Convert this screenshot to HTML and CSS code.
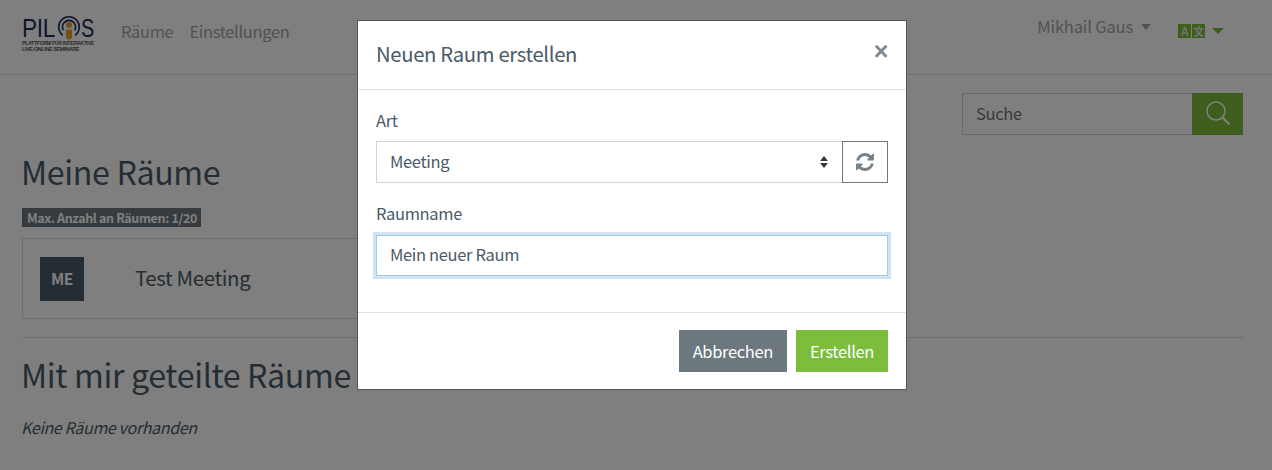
FILE: index.html
```html
<!DOCTYPE html>
<html lang="de">

<head>
    <meta charset="UTF-8">
    <meta name="viewport" content="width=device-width, initial-scale=1.0">
    <title>Meine Räume</title>
    <link rel="stylesheet" href="styles.css">
</head>

<body>
    <header class="navbar">
        <svg class="logo" width="74" height="38" viewBox="0 0 74 38">
            <text class="logo-name" x="0" y="22" textLength="33" lengthAdjust="spacingAndGlyphs">PIL</text>
            <circle cx="47" cy="12" r="10.3" fill="none" stroke="#1c2d5c" stroke-width="1.6"/>
            <circle cx="47" cy="12" r="6.6" fill="none" stroke="#1c2d5c" stroke-width="1.6"/>
            <path d="M41 24h12v-9h-12z" fill="#fff"/>
            <circle cx="47" cy="10" r="3" fill="#e5a02d"/>
            <path d="M44 14.500h6v7a3 3 0 0 1-6 0z" fill="#e5a02d"/>
            <text class="logo-name" x="59" y="22" textLength="13" lengthAdjust="spacingAndGlyphs">S</text>
            <text class="logo-sub" x="0" y="30" textLength="72" lengthAdjust="spacingAndGlyphs">PLATTFORM FÜR INTERAKTIVE</text>
            <text class="logo-sub" x="0" y="35.500" textLength="57" lengthAdjust="spacingAndGlyphs">LIVE-ONLINE SEMINARE</text>
        </svg>
        <nav class="nav-links">
            <a href="#">Räume</a>
            <a href="#">Einstellungen</a>
        </nav>
        <div class="nav-right">
            <a class="user-menu" href="#">Mikhail Gaus<span class="caret"></span></a>
            <a class="lang-menu" href="#">
                <span class="lang-box">A</span><span class="lang-box">文</span><span class="caret caret-green"></span>
            </a>
        </div>
    </header>

    <main class="content">
        <div class="search-row">
            <div class="search">
                <div class="search-input">Suche</div>
                <button class="search-btn" type="button">
                    <svg width="26" height="26" viewBox="0 0 26 26" fill="none" stroke="#fff" stroke-width="1.5">
                        <circle cx="11" cy="11" r="9"/>
                        <path d="M17.5 17.500l7 7" stroke-width="2.200"/>
                    </svg>
                </button>
            </div>
        </div>

        <h1 class="title">Meine Räume</h1>
        <span class="badge">Max. Anzahl an Räumen: 1/20</span>
        <div class="room-card">
            <div class="room-icon">ME</div>
            <div class="room-name">Test Meeting</div>
        </div>
        <hr class="divider">
        <h1 class="title title-shared">Mit mir geteilte Räume</h1>
        <p class="empty">Keine Räume vorhanden</p>
    </main>

    <div class="backdrop"></div>

    <div class="modal">
        <div class="modal-header">
            <h2>Neuen Raum erstellen</h2>
            <span class="close">×</span>
        </div>
        <div class="modal-body">
            <label class="field-label">Art</label>
            <div class="type-row">
                <div class="select">
                    Meeting
                    <svg class="select-arrows" width="8" height="12" viewBox="0 0 8 12" fill="#343a40">
                        <path d="M4 0l4 5H0z"/>
                        <path d="M4 12l4-5H0z"/>
                    </svg>
                </div>
                <button class="refresh-btn" type="button">
                    <svg width="18" height="18" viewBox="0 0 1536 1536" fill="#74828b">
                        <path d="M1511 928q0 5-1 7-64 268-268 434.500t-478 166.500q-146 0-282.500-55t-243.500-157l-129 129q-19 19-45 19t-45-19-19-45v-448q0-26 19-45t45-19h448q26 0 45 19t19 45-19 45l-137 137q71 66 161 102t187 36q134 0 250-65t186-179q11-17 53-117 8-23 30-23h192q13 0 22.500 9.500t9.500 22.500zm25-800v448q0 26-19 45t-45 19h-448q-26 0-45-19t-19-45 19-45l138-138q-148-137-349-137-134 0-250 65t-186 179q-11 17-53 117-8 23-30 23h-199q-13 0-22.500-9.500t-9.500-22.500v-7q65-268 270-434.500t480-166.500q146 0 284 55.500t245 156.500l130-129q19-19 45-19t45 19 19 45z"/>
                    </svg>
                </button>
            </div>
            <label class="field-label label-name">Raumname</label>
            <div class="text-input">Mein neuer Raum</div>
        </div>
        <div class="modal-footer">
            <button class="btn btn-grey" type="button">Abbrechen</button>
            <button class="btn btn-green" type="button">Erstellen</button>
        </div>
    </div>
</body>

</html>
```

FILE: styles.css
```css
/* Base */
body {
    font-family: "Noto Sans CJK SC", "Noto Sans", sans-serif;
    font-size: 16.5px;
    letter-spacing: -0.021em;
    line-height: 1.5;
    margin: 0;
    color: #4a5a68;
    background-color: #fff;
    height: 470px;
    overflow: hidden;
}

a {
    text-decoration: none;
    color: inherit;
}

/* Navbar */
.navbar {
    display: flex;
    align-items: flex-start;
    height: 75px;
    box-sizing: border-box;
    padding: 15px 48px 0 22px;
    border-bottom: 1px solid #dfdfdf;
}

.logo {
    flex-shrink: 0;
    overflow: visible;
}

.logo-name {
    font-family: "Liberation Sans", sans-serif;
    font-size: 26px;
    fill: #1c2d5c;
}

.logo-sub {
    font-family: "Liberation Sans", sans-serif;
    font-size: 5px;
    font-weight: bold;
    fill: #555;
}

.nav-links {
    display: flex;
    gap: 16px;
    margin-left: 25px;
    color: #a8a4a0;
    padding-top: 4px;
}

.nav-right {
    display: flex;
    margin-left: auto;
    color: #a8a4a0;
}

.user-menu {
    margin-top: -1px;
    letter-spacing: -0.01em;
}

.caret {
    display: inline-block;
    width: 0;
    height: 0;
    margin-left: 8px;
    vertical-align: 3px;
    border-top: 6px solid #a8a4a0;
    border-left: 5px solid transparent;
    border-right: 5px solid transparent;
}

.lang-menu {
    display: flex;
    align-items: center;
    gap: 1px;
    height: 14px;
    margin: 9px 0 0 27px;
}

.lang-box {
    width: 13px;
    height: 14px;
    background-color: #7cbd3c;
    color: #e4e4e4;
    font-size: 11px;
    font-weight: bold;
    line-height: 14px;
    text-align: center;
}

.caret-green {
    margin-left: 6px;
    vertical-align: 0;
    border-top-color: #7cbd3c;
    border-top-width: 6px;
    border-left-width: 6.5px;
    border-right-width: 6.5px;
}

/* Page content */
.content {
    padding: 18px 28px 0 22px;
}

.search-row {
    display: flex;
    justify-content: flex-end;
    padding-right: 1px;
}

.search {
    display: flex;
    width: 281px;
    height: 42px;
}

.search-input {
    flex: 1;
    border: 1px solid #ced4da;
    border-right: none;
    padding: 0 13px;
    line-height: 39px;
    color: #6c757d;
}

.search-btn {
    width: 51px;
    border: none;
    padding: 0;
    background-color: #7cbd3c;
}

.title {
    font-size: 32.200px;
    font-weight: 400;
    line-height: 42px;
    margin: 15px 0 0 -1px;
}

.badge {
    display: block;
    width: 179px;
    box-sizing: border-box;
    height: 19px;
    margin-top: 16px;
    padding-left: 5px;
    background-color: #6c777e;
    color: #fff;
    font-size: 12.500px;
    font-weight: 700;
    line-height: 19px;
    white-space: nowrap;
}

.room-card {
    display: flex;
    align-items: center;
    width: 500px;
    height: 81px;
    box-sizing: border-box;
    margin-top: 11px;
    padding-left: 17px;
    border: 1px solid #ddd;
}

.room-icon {
    width: 44px;
    height: 44px;
    background-color: #4a5a68;
    color: #fff;
    font-size: 15.500px;
    font-weight: 700;
    line-height: 42px;
    text-align: center;
}

.room-name {
    margin-left: 51px;
    padding-bottom: 3px;
    font-size: 20.400px;
}

.divider {
    margin: 18px 0 0;
    border: none;
    border-top: 1px solid #ddd;
}

.title-shared {
    margin-top: 15px;
}

.empty {
    margin: 20px 0 0 -1px;
    font-size: 16px;
    font-style: italic;
}

/* Modal */
.backdrop {
    position: fixed;
    inset: 0;
    background-color: rgba(0, 0, 0, 0.5);
}

.modal {
    position: fixed;
    top: 20px;
    left: 357px;
    width: 550px;
    height: 370px;
    box-sizing: border-box;
    background-color: #fff;
    border: 1px solid #555;
}

.modal-header {
    display: flex;
    align-items: center;
    justify-content: space-between;
    height: 69px;
    box-sizing: border-box;
    padding: 0 18px 4px 18px;
    border-bottom: 1px solid #dee2e6;
}

.modal-header h2 {
    font-size: 20.300px;
    font-weight: 400;
    margin: 0;
}

.close {
    font-family: "Liberation Sans", sans-serif;
    font-size: 25px;
    font-weight: 700;
    line-height: 1;
    color: #7b8a93;
    margin-top: -4px;
}

.modal-body {
    height: 222px;
    box-sizing: border-box;
    padding: 17px 18px 0 18px;
}

.field-label {
    display: block;
    line-height: 27px;
}

.label-name {
    margin-top: 17px;
}

.type-row {
    display: flex;
    height: 42px;
    margin-top: 7px;
}

.select {
    display: flex;
    align-items: center;
    justify-content: space-between;
    flex: 1;
    box-sizing: border-box;
    padding: 0 14px 1px 13px;
    border: 1px solid #ced4da;
    border-right: none;
}

.refresh-btn {
    width: 46px;
    display: flex;
    align-items: center;
    justify-content: center;
    padding: 0;
    background: #fff;
    border: 1px solid #6c777e;
}

.text-input {
    height: 41px;
    box-sizing: border-box;
    margin-top: 8px;
    padding: 0 13px;
    line-height: 37px;
    border: 1px solid #9ccbed;
    box-shadow: 0 0 0 3px #cfe4f6;
}

.modal-footer {
    display: flex;
    justify-content: flex-end;
    gap: 9px;
    height: 77px;
    box-sizing: border-box;
    padding: 17px 18px 0 0;
    border-top: 1px solid #dee2e6;
}

.btn {
    height: 42px;
    border: none;
    padding: 0 14px;
    color: #fff;
    font-family: inherit;
    font-size: 16.500px;
    letter-spacing: inherit;
}

.btn-grey {
    background-color: #6c777e;
}

.btn-green {
    background-color: #7cbd3c;
}
```
